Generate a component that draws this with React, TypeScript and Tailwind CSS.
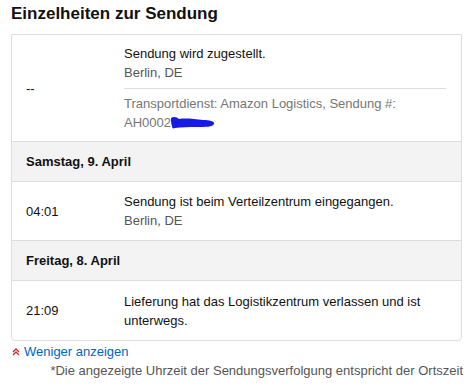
const rows = [
  {
    day: "Samstag, 9. April",
    time: "04:01",
    text: "Sendung ist beim Verteilzentrum eingegangen.",
    place: "Berlin, DE",
  },
  {
    day: "Freitag, 8. April",
    time: "21:09",
    text: "Lieferung hat das Logistikzentrum verlassen und ist unterwegs.",
    place: "",
  },
];

export default function App() {
  return (
    <div
      className="min-h-screen w-[471px] bg-white px-[11px] text-[13px] leading-[19px] text-[#111]"
      style={{ fontFamily: '"Liberation Sans", Arial, sans-serif' }}
    >
      {/* Title */}
      <h2 className="pt-[2px] text-[17px] font-bold leading-[24px] text-[#111]">
        Einzelheiten zur Sendung
      </h2>

      {/* Tracking box */}
      <div className="mt-[8px] w-[451px] rounded-b-[4px] border border-[#ddd]">
        <div className="flex h-[107px] items-center border-b border-[#ddd]">
          <div className="w-[112px] shrink-0 pl-[14px]">--</div>
          <div className="w-[322px]">
            <div>Sendung wird zugestellt.</div>
            <div className="text-[#555]">Berlin, DE</div>
            <div className="mt-[6px] border-t border-[#ddd] pt-[5px] text-[#767676]">
              <div>Transportdienst: Amazon Logistics, Sendung #:</div>
              <div className="flex items-center">
                AH0002
                <svg width="48" height="16" viewBox="0 0 48 16" className="-ml-[2px]">
                  <path
                    d="M2 3 C5 1 8 2 10 4 C16 3 26 4 34 5 C40 5 46 6 45 9 C44 12 36 12 28 12 C20 12 12 12 6 13 C4 14 3 13 3 11 C2 9 2 6 2 3 Z"
                    fill="#1a1ae6"
                  />
                </svg>
              </div>
            </div>
          </div>
        </div>

        {rows.map((r, i) => (
          <div key={r.day}>
            <div className="flex h-[40px] items-center border-b border-[#ddd] bg-[#f3f3f3] pl-[14px] font-bold">
              {r.day}
            </div>
            <div
              className={`flex h-[59px] items-center ${
                i < rows.length - 1 ? "border-b border-[#ddd]" : ""
              }`}
            >
              <div className="w-[112px] shrink-0 pl-[14px]">{r.time}</div>
              <div className="w-[322px]">
                <div>{r.text}</div>
                {r.place && <div className="text-[#555]">{r.place}</div>}
              </div>
            </div>
          </div>
        ))}
      </div>

      {/* Footer */}
      <div className="mt-[1px] flex items-center gap-[4px]">
        <svg width="8" height="8" viewBox="0 0 8 8" className="ml-[1px]">
          <path d="M1 4 L4 1 L7 4 M1 7 L4 4 L7 7" fill="none" stroke="#c9302c" strokeWidth="1.3" />
        </svg>
        <span className="text-[#0066c0]">Weniger anzeigen</span>
      </div>
      <div className="w-[452px] text-right text-[#555]">
        *Die angezeigte Uhrzeit der Sendungsverfolgung entspricht der Ortszeit
      </div>
    </div>
  );
}
